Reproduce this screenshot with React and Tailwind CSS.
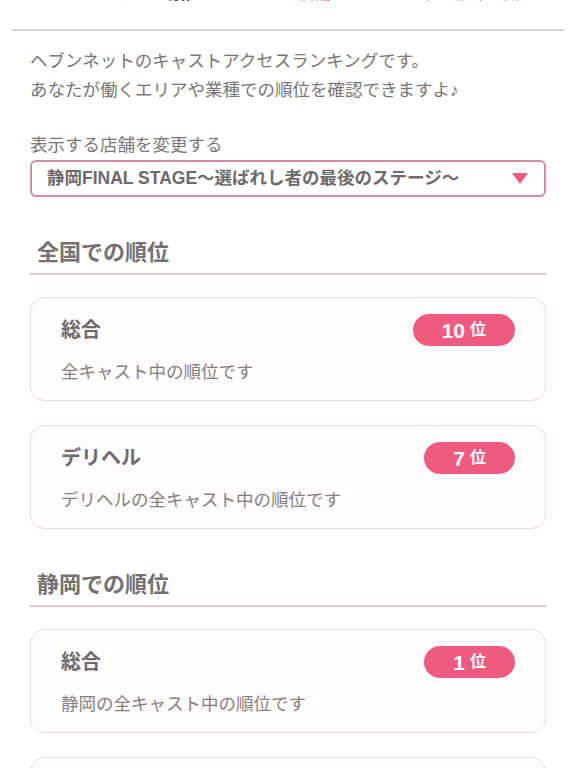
const font = {
  fontFamily: "'Liberation Sans', 'Noto Sans CJK JP', sans-serif",
};

const sections = [
  {
    title: '全国での順位',
    cards: [
      { name: '総合', desc: '全キャスト中の順位です', rank: 10 },
      { name: 'デリヘル', desc: 'デリヘルの全キャスト中の順位です', rank: 7 },
    ],
  },
  {
    title: '静岡での順位',
    cards: [
      { name: '総合', desc: '静岡の全キャスト中の順位です', rank: 1 },
      { name: 'デリヘル', desc: '静岡のデリヘルの全キャスト中の順位です', rank: 1 },
    ],
  },
];

function RankCard({ name, desc, rank }) {
  return (
    <div className="rounded-[14px] border border-[#f0d9dd] bg-[#fffcfd] pt-[16px] pb-[16px] pl-[30px] pr-[30px]">
      <div className="flex items-center justify-between">
        <div className="text-[20px] font-bold leading-[30px] text-[#6f6a6b]">{name}</div>
        <div className="flex h-[32px] items-center rounded-full bg-[#ef5a80] px-[29px] text-white">
          <span className="text-[21px] font-bold leading-none">{rank}</span>
          <span className="ml-[5px] text-[16px] font-bold leading-none">位</span>
        </div>
      </div>
      <div className="mt-[14px] text-[17.5px] leading-[24px] text-[#858080]">{desc}</div>
    </div>
  );
}

export default function App() {
  return (
    <div className="min-h-screen bg-white" style={font}>
      <div className="mx-3 h-[31px] overflow-hidden border-b-2 border-[#d6d6d6]">
        <div className="-mt-[16px] flex items-center text-[16px] leading-[20px]">
          <span className="ml-[13px] text-[#b8b8b8]">マイページトップ</span>
          <span className="ml-[16px] font-bold text-[#333]">順位</span>
          <span className="ml-[98px] text-[#e0607e]">店舗</span>
          <span className="ml-[30px] text-[#e0607e]">ランキング</span>
          <span className="ml-[10px] text-[#e0607e]">過去の順位</span>
        </div>
      </div>

      <div className="px-[30px] pt-[16px]">
        <p className="text-[17.5px] leading-[29px] text-[#7a7676]">
          ヘブンネットのキャストアクセスランキングです。
          <br />
          あなたが働くエリアや業種での順位を確認できますよ♪
        </p>

        <div className="mt-[28px] text-[17.5px] leading-[24px] text-[#7a7676]">表示する店舗を変更する</div>
        <div className="mt-[3px] flex h-[37px] items-center justify-between rounded-[6px] border-2 border-[#d68ea3] pl-[15px] pr-[16px]">
          <span className="text-[17.5px] font-bold text-[#6f6a6b]">静岡FINAL STAGE〜選ばれし者の最後のステージ〜</span>
          <svg width="16" height="11" viewBox="0 0 16 11">
            <path d="M0 0 H16 L8 11 Z" fill="#ec5a7e" />
          </svg>
        </div>

        {sections.map((s) => (
          <div key={s.title} className="mt-[41px]">
            <div className="border-b-2 border-[#dcc8c6] pb-[5px] pl-[7px] text-[22px] font-bold leading-[30px] text-[#767070]">
              {s.title}
            </div>
            <div className="mt-[22px] flex flex-col gap-[24px]">
              {s.cards.map((c) => (
                <RankCard key={c.desc} {...c} />
              ))}
            </div>
          </div>
        ))}
      </div>
    </div>
  );
}
